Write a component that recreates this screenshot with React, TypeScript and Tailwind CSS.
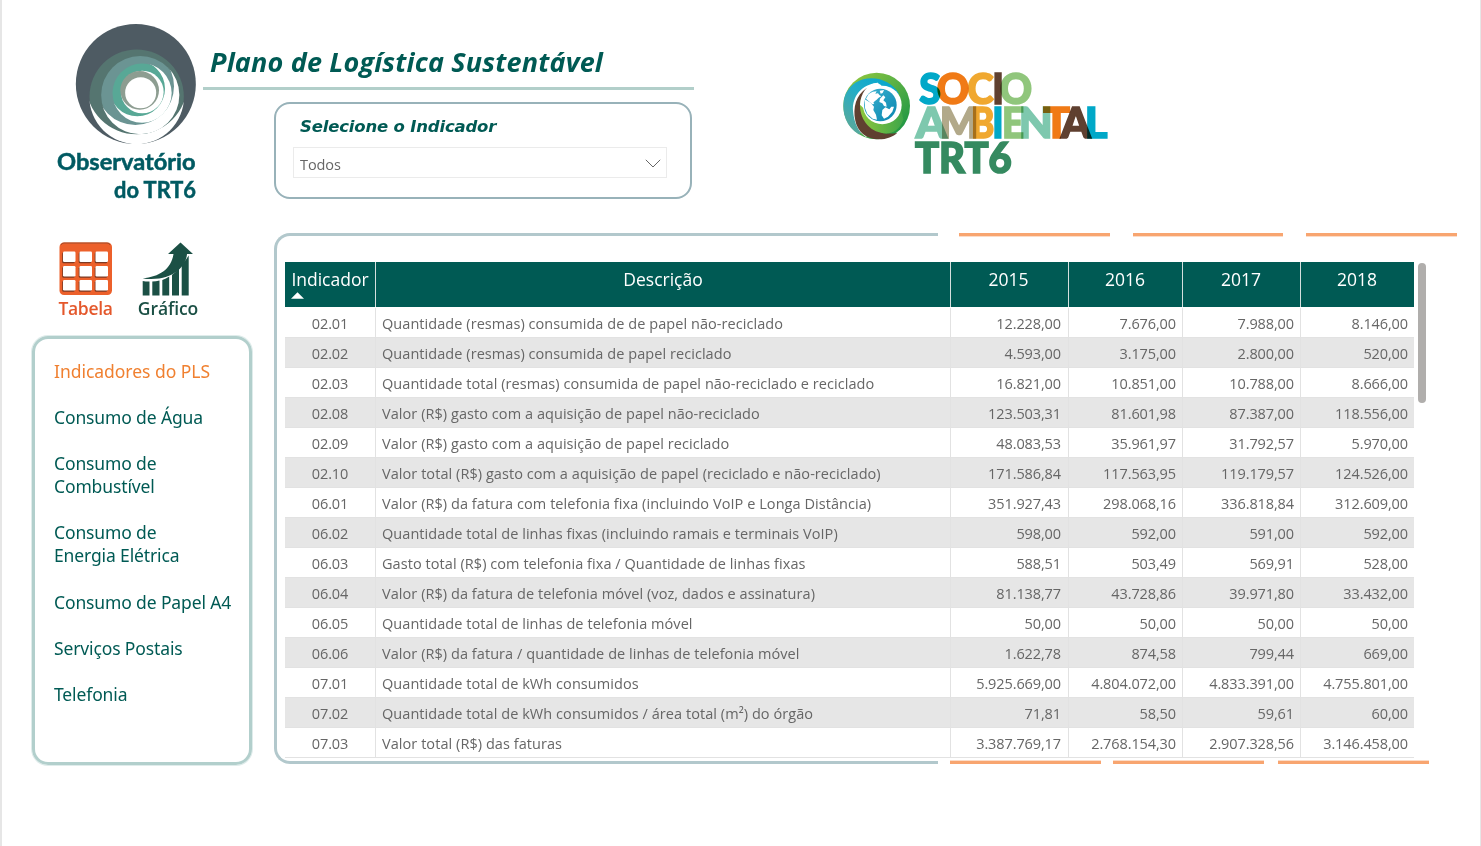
import React from "react";

const rows: string[][] = [
  ["02.01", "Quantidade (resmas) consumida de de papel não-reciclado", "12.228,00", "7.676,00", "7.988,00", "8.146,00"],
  ["02.02", "Quantidade (resmas) consumida de papel reciclado", "4.593,00", "3.175,00", "2.800,00", "520,00"],
  ["02.03", "Quantidade total (resmas) consumida de papel não-reciclado e reciclado", "16.821,00", "10.851,00", "10.788,00", "8.666,00"],
  ["02.08", "Valor (R$) gasto com a aquisição de papel não-reciclado", "123.503,31", "81.601,98", "87.387,00", "118.556,00"],
  ["02.09", "Valor (R$) gasto com a aquisição de papel reciclado", "48.083,53", "35.961,97", "31.792,57", "5.970,00"],
  ["02.10", "Valor total (R$) gasto com a aquisição de papel (reciclado e não-reciclado)", "171.586,84", "117.563,95", "119.179,57", "124.526,00"],
  ["06.01", "Valor (R$) da fatura com telefonia fixa (incluindo VoIP e Longa Distância)", "351.927,43", "298.068,16", "336.818,84", "312.609,00"],
  ["06.02", "Quantidade total de linhas fixas (incluindo ramais e terminais VoIP)", "598,00", "592,00", "591,00", "592,00"],
  ["06.03", "Gasto total (R$) com telefonia fixa / Quantidade de linhas fixas", "588,51", "503,49", "569,91", "528,00"],
  ["06.04", "Valor (R$) da fatura de telefonia móvel (voz, dados e assinatura)", "81.138,77", "43.728,86", "39.971,80", "33.432,00"],
  ["06.05", "Quantidade total de linhas de telefonia móvel", "50,00", "50,00", "50,00", "50,00"],
  ["06.06", "Valor (R$) da fatura / quantidade de linhas de telefonia móvel", "1.622,78", "874,58", "799,44", "669,00"],
  ["07.01", "Quantidade total de kWh consumidos", "5.925.669,00", "4.804.072,00", "4.833.391,00", "4.755.801,00"],
  ["07.02", "Quantidade total de kWh consumidos / área total (m²) do órgão", "71,81", "58,50", "59,61", "60,00"],
  ["07.03", "Valor total (R$) das faturas", "3.387.769,17", "2.768.154,30", "2.907.328,56", "3.146.458,00"],
];

// Each ring is a disc with a white crescent: the part of the disc outside a second circle.
type Ring = { id: string; disc: [number, number, number]; cut: [number, number, number]; fill: string };
const rings: Ring[] = [
  { id: "r2", disc: [290, 260, 142], cut: [290, 221, 152], fill: "#557570" },
  { id: "r3", disc: [300.5, 255, 117.5], cut: [286, 229, 116], fill: "#6b9493" },
  { id: "r4", disc: [306, 249, 89], cut: [292, 236, 83], fill: "#58a896" },
  { id: "r5", disc: [300, 241, 57], cut: [297, 243, 58], fill: "#8d9d91" },
];

function ObservatorioLogo() {
  return (
    <svg className="ml-[38px] mt-[10px] block h-[200px] w-[200px] shrink-0" viewBox="0 0 600 600">
      <circle cx="287.500" cy="222" r="180" fill="#4e5b63" />
      {rings.map(({ id, disc, cut: [cx, cy, r], fill }) => (
        <g key={id}>
          <clipPath id={id}><circle cx={disc[0]} cy={disc[1]} r={disc[2]} /></clipPath>
          <circle cx={disc[0]} cy={disc[1]} r={disc[2] - 0.5} fill={id === "r5" ? "#fff" : fill} />
          {id === "r5" && <circle cx="307" cy="246" r="64" fill="#fff" />}
          {id === "r5" && <circle cx="299" cy="241" r="58" fill={fill} />}
          {id !== "r5" && (
            <path clipPath={`url(#${id})`} fill="#fff" fillRule="evenodd" d={`M0 0H600V600H0ZM${cx - r} ${cy}a${r} ${r} 0 1 0 ${2 * r} 0a${r} ${r} 0 1 0 ${-2 * r} 0Z`} />
          )}
        </g>
      ))}
      <circle cx="302" cy="248" r="46.500" fill="#fff" />
      <g fill="#005a62" fontFamily="Lato" fontWeight="700">
        <text x="51" y="480" fontSize="67" textLength="416" lengthAdjust="spacingAndGlyphs" stroke="#005a62" strokeWidth="1.500">Observatório</text>
        <text x="222" y="563" fontSize="67" textLength="246" lengthAdjust="spacingAndGlyphs" stroke="#005a62" strokeWidth="1.500">do TRT6</text>
      </g>
    </svg>
  );
}

type Glyph = [string, number, number, string];
const socio: Glyph[] = [["S", 268, 65, "#00a8c8"], ["O", 320, 97, "#f07a16"], ["C", 412, 79, "#f0a830"], ["I", 487, 35, "#5f4030"], ["O", 509, 97, "#90c67c"]];
const ambiental: Glyph[] = [["A", 257, 93, "#7ec8ae"], ["M", 329, 116, "#b2a98a"], ["B", 423, 70, "#f0a830"], ["I", 487, 34, "#00a8c8"], ["E", 516, 66, "#90c67c"], ["N", 566, 102, "#7ec8ae"], ["T", 640, 80, "#f07a16"], ["A", 693, 89, "#5f4030"], ["L", 764, 68, "#00a8c8"]];

function SocioLogo() {
  return (
    <svg className="block h-[130px] w-[290px]" viewBox="0 0 870 390">
      <defs>
        <linearGradient id="gr" x1="0" y1="0" x2="1" y2="1"><stop offset="0" stopColor="#9bcb3c" /><stop offset="0.450" stopColor="#5cb245" /><stop offset="1" stopColor="#0f8f43" /></linearGradient>
        <linearGradient id="gi" x1="0" y1="0" x2="1" y2="0"><stop offset="0" stopColor="#8cc63f" /><stop offset="1" stopColor="#3fa648" /></linearGradient>
        <linearGradient id="bl" x1="1" y1="0" x2="0.200" y2="1"><stop offset="0" stopColor="#00a5cf" /><stop offset="0.500" stopColor="#22adc8" /><stop offset="1" stopColor="#5aa99a" /></linearGradient>
        <linearGradient id="gl" x1="0" y1="0" x2="1" y2="1"><stop offset="0" stopColor="#3bb3d0" /><stop offset="1" stopColor="#0b86b0" /></linearGradient>
      </defs>
      <g transform="translate(24 18)">
        <circle cx="116" cy="120" r="100" fill="url(#gr)" />
        <path d="M183 84C160 42 100 22 52 50C30 66 22 84 18 98C10 142 26 182 62 205C110 190 110 100 183 84Z" fill="url(#bl)" />
        <path d="M120 50C70 54 42 92 45 134C48 172 62 198 84 213L110 190V60Z" fill="#fff" />
        <path d="M86 66C54 88 44 124 52 164C58 196 84 219 122 220C146 220 166 212 178 200C150 206 130 200 130 200L96 90Z" fill="#5f4030" />
        <path d="M66 118C66 168 104 206 152 202C176 198 190 180 196 160L180 90L80 80Q66 96 66 118Z" fill="url(#gi)" />
        <circle cx="133" cy="117" r="58" fill="#fff" />
        <path d="M118 50C86 54 68 82 66 116L80 130L130 110V58Z" fill="#fff" />
        <circle cx="127" cy="117" r="49" fill="url(#gl)" />
        <g fill="#fff">
          <path d="M84 98L92 84L104 77L116 76L112 83L120 82L124 87L130 91L122 95L116 101L110 106L106 110L109 114L103 115L95 108Z" />
          <path d="M80 100L98 110L108 122L106 132L114 146L117 161L104 158L88 144L81 126Z" />
          <path d="M125 74L138 72L134 81L128 83Z" />
          <path d="M126 98L136 88L142 94L136 103L144 110L146 122L138 120L133 112L124 108Z" />
          <path d="M133 132L142 124L154 130L160 122L168 122L163 137L150 152L138 158L131 148Z" />
        </g>
      </g>
      <g fontFamily="Lato" fontWeight="900" fontSize="126" strokeWidth="5">
        {socio.map(([c, x, w, f], i) => (
          <text key={i} x={x} y="132" fill={f} stroke={f} textLength={w} lengthAdjust="spacingAndGlyphs" className="mix-blend-multiply">{c}</text>
        ))}
        {ambiental.map(([c, x, w, f], i) => (
          <text key={i} x={x} y="235" fill={f} stroke={f} textLength={w} lengthAdjust="spacingAndGlyphs" className="mix-blend-multiply">{c}</text>
        ))}
        <text x="255" y="340" fill="#358a60" stroke="#358a60" textLength="290" lengthAdjust="spacingAndGlyphs">TRT6</text>
      </g>
    </svg>
  );
}

function TabelaIcon() {
  return (
    <svg className="block h-[54px] w-[54px]" viewBox="0 0 54 54">
      <rect x="0.500" y="0.500" width="52.500" height="52.500" rx="4.500" fill="#ec602b" />
      <path d="M2 3Q2.500 1 5 1H48Q50.500 1 51 3" stroke="#a04a2a" strokeWidth="1" fill="none" />
      {[4, 20.5, 36.5].map((x) => [9.5, 24, 38].map((y) => (
        <g key={`${x}-${y}`}>
          <rect x={x - 0.8} y={y + 0.8} width="12.500" height="11" rx="1.500" fill="#7c3a24" />
          <rect x={x} y={y} width="12.500" height="10.500" rx="1.200" fill="#fff" />
        </g>
      )))}
    </svg>
  );
}

function GraficoIcon() {
  return (
    <svg className="block h-[54px] w-[52px]" viewBox="0 0 52 54" fill="#1b5045">
      <path d="M38.500 0.500L51 12H45C44 25 30 40 0.700 36.500C17 34.500 29 28 31.500 12H26Z" />
      <path d="M0.700 39Q4 39.600 7.500 39.500V53.500H0.700ZM10.300 39.500Q14 39.300 17.500 38.500V53.500H10.300ZM20.300 38Q24 36.500 27.200 34.500V53.500H20.300ZM30 33Q34 30 37 26V53.500H30ZM39.700 23Q44 18 46.700 13.500V53.500H39.700Z" />
    </svg>
  );
}

const menu = ["Indicadores do PLS", "Consumo de Água", "Consumo de\nCombustível", "Consumo de\nEnergia Elétrica", "Consumo de Papel A4", "Serviços Postais", "Telefonia"];

function Sidebar() {
  return (
    <aside className="flex w-[272px] shrink-0 flex-col">
      <ObservatorioLogo />
      <div className="ml-[56px] mt-[32px] flex h-[94px] font-['Open_Sans',sans-serif] text-[17.500px] font-semibold leading-[24px]">
        <button className="flex w-[55px] flex-col items-center text-[#e4572b]"><TabelaIcon /><span className="tracking-[-0.300px]">Tabela</span></button>
        <button className="ml-[23px] flex w-[64px] flex-col items-center text-[#1b5045]"><GraficoIcon /><span className="tracking-[-0.100px]">Gráfico</span></button>
      </div>
      <nav className="ml-[30px] flex h-[429px] w-[220px] flex-col gap-[23px] rounded-[16px] border-[3px] border-[#b2cfcc] pl-[19px] pt-[21px] font-['Noto_Sans',sans-serif] text-[17.500px] leading-[23.100px] tracking-[-0.130px] text-[#005a54] shadow-[0_0_0_1px_#dfeceb]">
        {menu.map((m, i) => (
          <a key={m} className={i === 0 ? "whitespace-pre text-[#f08030] tracking-[-0.030px]" : "whitespace-pre"}>{m}</a>
        ))}
      </nav>
    </aside>
  );
}

function Filter() {
  return (
    <section className="mt-[12px] flex h-[97px] w-[418px] flex-col rounded-[16px] border-2 border-[#98b2b9] pl-[17px] pt-[11px]">
      <h2 className="pl-[7px] font-['DejaVu_Sans',sans-serif] text-[16.500px] font-bold italic leading-[24px] tracking-[-0.180px] text-[#005a54]">Selecione o Indicador</h2>
      <div className="mt-[8px] flex h-[31px] w-[374px] items-center justify-between border border-[#ebebeb] pl-[6px] pr-[5px] font-['Open_Sans',sans-serif] text-[14.500px] text-[#666]">
        <span className="pt-[5px] tracking-[-0.100px]">Todos</span>
        <svg className="mt-[2px] h-[9px] w-[16px]" viewBox="0 0 16 9" fill="none" stroke="#666"><path d="M0.800 0.800L8 8L15.200 0.800" /></svg>
      </div>
    </section>
  );
}

function DataTable() {
  return (
    <div className="ml-[11px] mt-[29px] h-[496px] w-[1129px] overflow-hidden border-b border-[#e2e2e2] [grid-area:1/1] font-['Open_Sans',sans-serif]">
      <div className="grid h-[45px] grid-cols-[91px_575px_118px_114px_118px_113px] bg-[#005a54] text-center text-[17.500px] leading-[24px] text-white">
        <div className="border-r border-[#d5dfde] pt-[5px]">
          Indicador
          <svg className="ml-[6px] mt-[1px] block h-[7px] w-[13px]" viewBox="0 0 14 7" fill="#fff"><path d="M0 7L7 0L14 7Z" /></svg>
        </div>
        <div className="border-r border-[#d5dfde] pt-[5px]">Descrição</div>
        <div className="border-r border-[#d5dfde] pr-[2px] pt-[5px]">2015</div>
        <div className="border-r border-[#d5dfde] pr-[1px] pt-[5px]">2016</div>
        <div className="border-r border-[#d5dfde] pr-[1px] pt-[5px]">2017</div>
        <div className="pr-[1px] pt-[5px]">2018</div>
      </div>
      {rows.map((r, i) => (
        <div key={r[0]} className={`grid h-[30px] grid-cols-[91px_575px_118px_114px_118px_113px] overflow-hidden border-t text-[14.500px] leading-[32px] text-[#666] ${i % 2 ? "bg-[#e6e6e6]" : ""} ${i === 0 ? "border-white" : "border-[#e2e2e2]"}`}>
          <div className="border-r border-[#e2e2e2] text-center tracking-[-0.100px]">{r[0]}</div>
          <div className="border-r border-[#e2e2e2] pl-[6px] tracking-[0.060px]">{r[1]}</div>
          {r.slice(2).map((v, k) => (
            <div key={k} className={`text-right tracking-[-0.100px] ${k === 0 ? "pr-[7px]" : "pr-[6px]"} ${k < 3 ? "border-r border-[#e2e2e2]" : ""}`}>{v}</div>
          ))}
        </div>
      ))}
    </div>
  );
}

export default function App() {
  return (
    <div className="flex h-[846px] w-[1481px] overflow-hidden border-l-2 border-r border-l-[#e6e6e6] border-r-[#e6e6e6] bg-white">
      <Sidebar />
      <main className="flex flex-1 flex-col">
        <header className="flex h-[233px]">
          <div className="w-[420px]">
            <h1 className="-ml-[71px] mt-[42px] w-[491px] border-b-[3px] border-[#b2cfca] pb-[5px] pl-[7px] font-['Open_Sans',sans-serif] text-[27px] font-bold italic leading-[40px] tracking-[0.170px] text-[#005a54]">Plano de Logística Sustentável</h1>
            <Filter />
          </div>
          <div className="ml-[136px] mt-[60px]"><SocioLogo /></div>
        </header>
        <section className="grid h-[531px] w-[1190px] grid-cols-1 grid-rows-1">
          <div className="h-[531px] w-[664px] rounded-l-[16px] border-[3px] border-r-0 border-[#b2c8cc] [grid-area:1/1]" />
          <div className="flex h-[531px] flex-col justify-between pr-[7px] [grid-area:1/1]">
            <div className="flex gap-[23px] pl-[685px]">
              <i className="h-[4px] w-[151px] border-b border-[#fcdcc8] bg-[#f8a570]" /><i className="h-[4px] w-[151px] border-b border-[#fcdcc8] bg-[#f8a570]" /><i className="h-[4px] w-[151px] border-b border-[#fcdcc8] bg-[#f8a570]" />
            </div>
            <div className="flex pl-[676px]">
              <i className="h-[4px] w-[151px] border-t border-[#fcdcc8] bg-[#f8a570]" /><i className="ml-[12px] h-[4px] w-[151px] border-t border-[#fcdcc8] bg-[#f8a570]" /><i className="ml-[14px] h-[4px] w-[151px] border-t border-[#fcdcc8] bg-[#f8a570]" />
            </div>
          </div>
          <DataTable />
          <div className="ml-[1144px] mt-[30px] h-[140px] w-[8px] rounded-full bg-[#b0aeac] [grid-area:1/1]" />
        </section>
      </main>
    </div>
  );
}
